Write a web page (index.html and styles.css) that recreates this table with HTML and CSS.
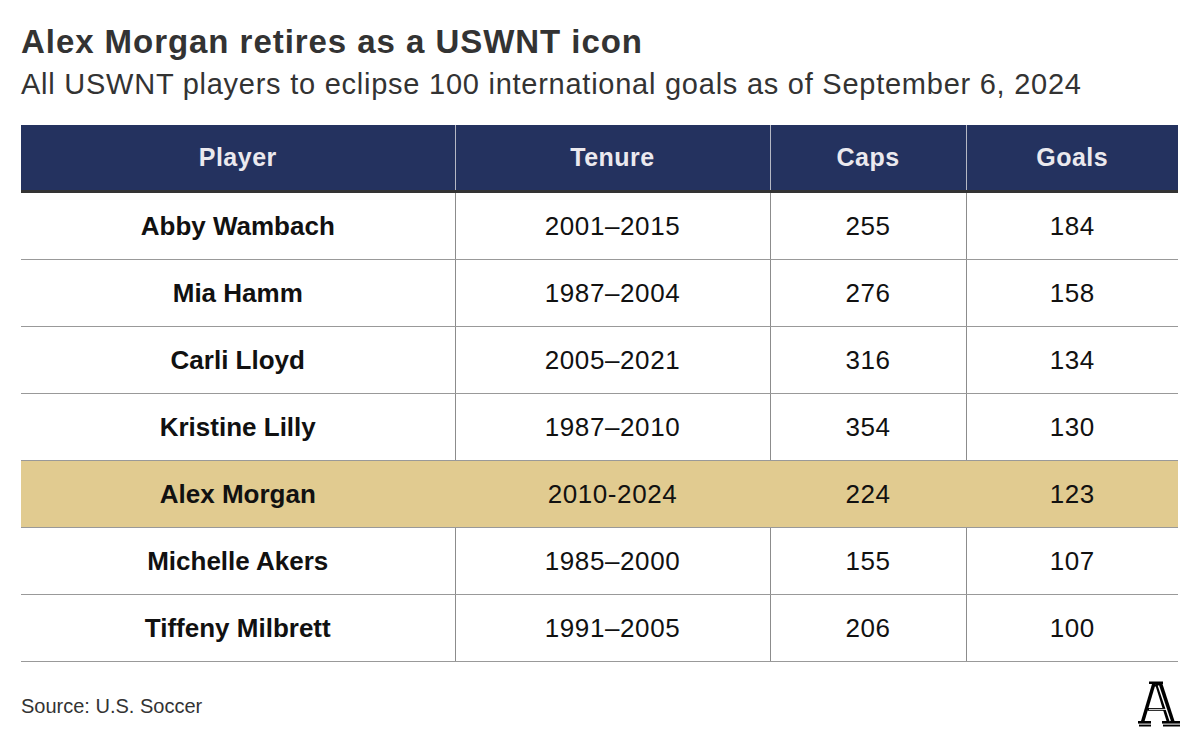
FILE: index.html
```html
<!DOCTYPE html>
<html lang="en">
<head>
<meta charset="utf-8">
<title>Alex Morgan retires as a USWNT icon</title>
<link rel="stylesheet" href="styles.css">
</head>
<body>
<div class="page">
  <h1 class="title">Alex Morgan retires as a USWNT icon</h1>
  <p class="subtitle">All USWNT players to eclipse 100 international goals as of September 6, 2024</p>
  <table class="stats">
    <colgroup>
      <col class="c1"><col class="c2"><col class="c3"><col class="c4">
    </colgroup>
    <thead>
      <tr><th>Player</th><th>Tenure</th><th>Caps</th><th>Goals</th></tr>
    </thead>
    <tbody>
      <tr><td class="name">Abby Wambach</td><td>2001–2015</td><td>255</td><td>184</td></tr>
      <tr><td class="name">Mia Hamm</td><td>1987–2004</td><td>276</td><td>158</td></tr>
      <tr><td class="name">Carli Lloyd</td><td>2005–2021</td><td>316</td><td>134</td></tr>
      <tr><td class="name">Kristine Lilly</td><td>1987–2010</td><td>354</td><td>130</td></tr>
      <tr class="hl"><td class="name">Alex Morgan</td><td>2010-2024</td><td>224</td><td>123</td></tr>
      <tr><td class="name">Michelle Akers</td><td>1985–2000</td><td>155</td><td>107</td></tr>
      <tr><td class="name">Tiffeny Milbrett</td><td>1991–2005</td><td>206</td><td>100</td></tr>
    </tbody>
  </table>
  <div class="footer">
    <span class="source">Source: U.S. Soccer</span>
    <svg class="logo" viewBox="0 0 44 46" width="44" height="46" aria-label="The Athletic">
      <g fill="#000">
        <path d="M12 0.5 H26 V3 H12 Z"/>
        <path d="M15 4 H24 V5.5 H15 Z"/>
        <path d="M15 3 L18.6 3 L7.6 40 L4 40 Z"/>
        <path d="M18 3 L25.5 3 L37.5 40 L29.5 40 Z"/>
        <path d="M10.5 27 H31 V29.8 H10.5 Z"/>
        <path d="M1 40 H14 V42.6 H1 Z"/>
        <path d="M2 43.6 H14 V45.5 H2 Z"/>
        <path d="M25 40 H43 V42.6 H25 Z"/>
        <path d="M26 43.6 H43 V45.5 H26 Z"/>
      </g>
      <path d="M21.4 4.5 L33.2 40" stroke="#fff" stroke-width="1.4" fill="none"/>
      <path d="M12 28.4 H29.5" stroke="#fff" stroke-width="0.9" fill="none"/>
    </svg>
  </div>
</div>
</body>
</html>
```

FILE: styles.css
```css
html, body {
  margin: 0;
  padding: 0;
  background: #ffffff;
}

.page {
  width: 1157px;
  padding: 22px 0 0 21px;
  font-family: "Liberation Sans", Arial, sans-serif;
}

.title {
  margin: 0;
  font-size: 33px;
  line-height: 40px;
  font-weight: 700;
  color: #333333;
  letter-spacing: 0.95px;
}

.subtitle {
  margin: 5px 0 0 0;
  font-size: 29px;
  line-height: 34px;
  font-weight: 400;
  color: #333333;
  letter-spacing: 0.75px;
}

.stats {
  margin-top: 24px;
  width: 1157px;
  border-collapse: collapse;
  table-layout: fixed;
}

.c1 { width: 434px; }
.c2 { width: 315px; }
.c3 { width: 196px; }
.c4 { width: 212px; }

.stats th {
  height: 65px;
  padding: 0;
  background: #24325f;
  color: #ebe9ee;
  font-size: 25px;
  font-weight: 700;
  letter-spacing: 0.5px;
  text-align: center;
  border-left: 1px solid #b5b8c4;
  border-bottom: 3px solid #333333;
}

.stats th:first-child {
  border-left: none;
}

.stats td {
  height: 66px;
  padding: 0;
  font-size: 26px;
  letter-spacing: 0.6px;
  color: #111111;
  text-align: center;
  border-left: 1px solid #8c8c8c;
  border-bottom: 1px solid #999999;
}

.stats td:first-child {
  border-left: none;
}

.stats td.name {
  font-weight: 700;
  letter-spacing: 0;
}

.stats tr.hl td {
  background: #e1cb90;
  border-left-color: #e1cb90;
}

.stats tr.hl td:first-child {
  border-left: none;
}

.footer {
  display: flex;
  justify-content: space-between;
  align-items: flex-start;
  margin-top: 19px;
}

.source {
  font-size: 20px;
  line-height: 50px;
  color: #333333;
}

.logo {
  display: block;
  margin-right: -3px;
}
```
